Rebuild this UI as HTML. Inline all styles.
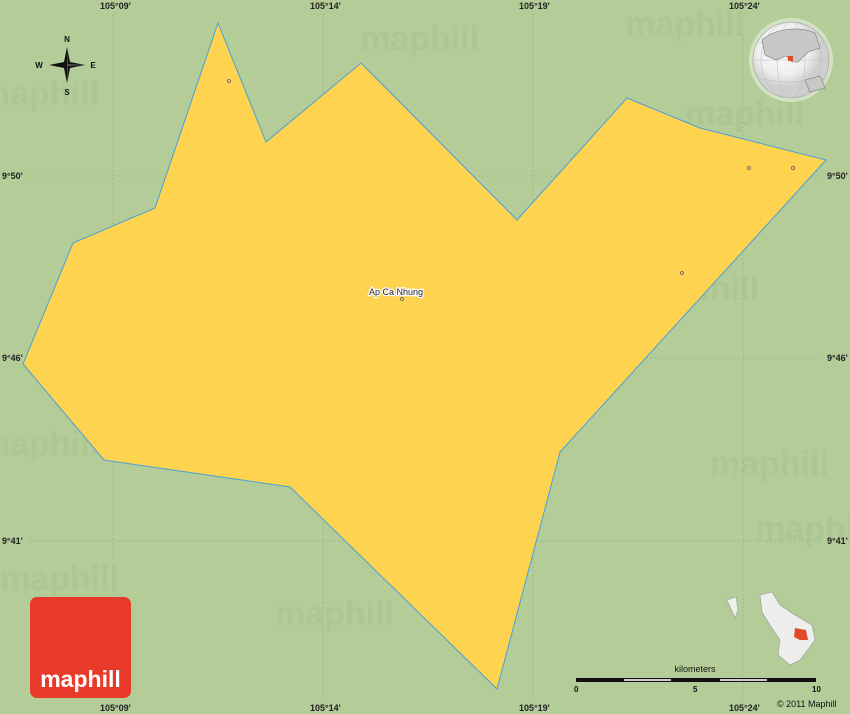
<!DOCTYPE html>
<html><head><style>
body{margin:0;width:850px;height:714px;overflow:hidden;background:#b3cc98;font-family:"Liberation Sans",sans-serif}
</style></head><body>
<svg width="850" height="714" viewBox="0 0 850 714" xmlns="http://www.w3.org/2000/svg" style="position:absolute;left:0;top:0">
<rect width="850" height="714" fill="#b3cc98"/>
<g font-family="Liberation Sans" font-weight="bold" font-size="34" fill="#a6c08b" opacity="0.45">
<text x="360" y="50">maphill</text><text x="625" y="35">maphill</text><text x="685" y="125">maphill</text>
<text x="370" y="315">maphill</text><text x="640" y="300">maphill</text><text x="390" y="425">maphill</text>
<text x="710" y="475">maphill</text><text x="275" y="625">maphill</text><text x="-20" y="455">maphill</text>
<text x="-20" y="105">maphill</text><text x="755" y="540">maphill</text><text x="0" y="590">maphill</text>
</g>
<g stroke="#9fb888" stroke-dasharray="2,2" stroke-width="1">
<line x1="113" y1="14" x2="113" y2="700"/><line x1="323" y1="14" x2="323" y2="700"/>
<line x1="533" y1="14" x2="533" y2="700"/><line x1="743" y1="14" x2="743" y2="700"/>
<line x1="30" y1="176" x2="820" y2="176"/><line x1="30" y1="358" x2="820" y2="358"/><line x1="30" y1="541" x2="820" y2="541"/>
</g>
<polygon points="218,23 266,142 361,63 517,220 627,98 700,128 826,160 560,452 497,689 290,487 104,460 23,364 73,243 155,208" fill="#fed34f" stroke="#4aa0d8" stroke-width="1"/>
<g font-size="9" font-weight="bold" fill="#222">
<text x="100" y="9">105°09'</text><text x="310" y="9">105°14'</text><text x="519" y="9">105°19'</text><text x="729" y="9">105°24'</text>
<text x="100" y="711">105°09'</text><text x="310" y="711">105°14'</text><text x="519" y="711">105°19'</text><text x="729" y="711">105°24'</text>
<text x="2" y="179">9°50'</text><text x="2" y="361">9°46'</text><text x="2" y="544">9°41'</text>
<text x="827" y="179">9°50'</text><text x="827" y="361">9°46'</text><text x="827" y="544">9°41'</text>
</g>
<g fill="none" stroke="#557" stroke-width="0.8">
<circle cx="229" cy="81" r="1.5"/><circle cx="749" cy="168" r="1.5"/><circle cx="793" cy="168" r="1.5"/><circle cx="682" cy="273" r="1.5"/><circle cx="402" cy="299" r="1.5"/>
</g>
<text x="369" y="295" font-size="9" fill="#222" stroke="#fff" stroke-width="2.5" paint-order="stroke">Ap Ca Nhung</text>
<g transform="translate(67,65)">
<polygon points="0,-18 3,-3 18,0 3,3 0,18 -3,3 -18,0 -3,-3" fill="#111"/>
<polygon points="0,-18 1,-1 18,0 1,1 0,18" fill="#555"/>
<g font-size="8" font-weight="bold" fill="#111" text-anchor="middle">
<text x="0" y="-23">N</text><text x="0" y="30">S</text><text x="-28" y="3">W</text><text x="26" y="3">E</text></g>
</g>
<defs><radialGradient id="g" cx="40%" cy="35%"><stop offset="0" stop-color="#ffffff"/><stop offset="0.7" stop-color="#eeeeee"/><stop offset="1" stop-color="#cfcfcf"/></radialGradient></defs>
<circle cx="791" cy="60" r="42" fill="#e8f0df" opacity="0.6"/>
<circle cx="791" cy="60" r="38" fill="url(#g)" stroke="#aaa" stroke-width="0.8"/>
<g fill="none" stroke="#bbb" stroke-width="0.5"><ellipse cx="791" cy="60" rx="14" ry="38"/><ellipse cx="791" cy="60" rx="30" ry="38"/><line x1="753" y1="60" x2="829" y2="60"/><path d="M757 42 Q791 50 825 42"/><path d="M757 78 Q791 86 825 78"/></g>
<path d="M762 40 C775 28 800 26 815 33 L820 48 L808 52 L798 62 L792 62 L786 56 L776 60 L765 55 Z" fill="#c8c8c8" stroke="#777" stroke-width="0.6"/>
<path d="M805 80 L820 76 L825 88 L810 92 Z" fill="#c8c8c8" stroke="#777" stroke-width="0.6"/>
<rect x="788" y="56" width="5" height="5" fill="#e04a2a"/>
<path d="M760 595 L772 592 L780 605 L795 615 L812 625 L815 640 L800 660 L790 665 L778 655 L780 640 L770 625 L762 612 Z" fill="#eeeeec" stroke="#999" stroke-width="0.6"/>
<path d="M727 600 L736 597 L738 610 L735 618 Z" fill="#eeeeec" stroke="#999" stroke-width="0.6"/>
<polygon points="795,628 806,630 808,640 800,640 794,637" fill="#e04a2a"/>
<text x="695" y="672" font-size="9" fill="#111" text-anchor="middle">kilometers</text>
<rect x="576" y="678" width="240" height="4" fill="#111"/>
<rect x="624" y="679" width="47" height="2" fill="#ccc"/><rect x="720" y="679" width="47" height="2" fill="#ccc"/>
<g font-size="8" font-weight="bold" fill="#111"><text x="574" y="692">0</text><text x="693" y="692">5</text><text x="812" y="692">10</text></g>
<text x="777" y="707" font-size="9" fill="#111">© 2011 Maphill</text>
<rect x="30" y="597" width="101" height="101" rx="7" fill="#e83a2b"/>
<text x="80.5" y="687" font-size="23" font-weight="bold" fill="#fff" text-anchor="middle">maphill</text>
</svg>
</body></html>
